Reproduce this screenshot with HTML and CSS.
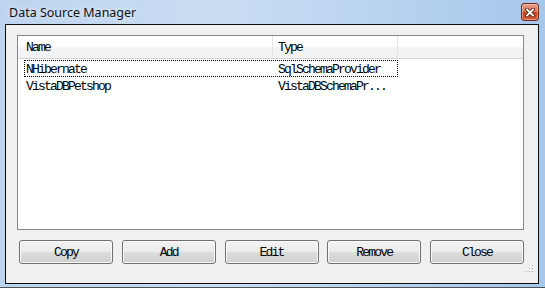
FILE: index.html
```html
<!DOCTYPE html>
<html lang="en">
<head>
<meta charset="UTF-8" />
<title>Data Source Manager</title>
<link rel="stylesheet" href="styles.css">
</head>
<body>

<div class="window">
  <div class="titlebar">
    <span class="title">Data Source Manager</span>
    <button class="close-btn" title="Close">
      <svg width="10" height="9" viewBox="0 0 10 9">
        <path d="M2 1.5 L8 7.5 M8 1.5 L2 7.5" stroke="#5a2114" stroke-width="3.6" stroke-linecap="square" />
        <path d="M2 1.5 L8 7.5 M8 1.5 L2 7.5" stroke="#fff" stroke-width="1.8" stroke-linecap="square" />
      </svg>
    </button>
  </div>

  <div class="client">
    <!-- List of data sources -->
    <div class="listview">
      <div class="lv-header">
        <div class="col col-name">Name</div>
        <div class="col col-type">Type</div>
        <div class="col col-fill"></div>
      </div>
      <div class="lv-body">
        <div class="lv-row focused">
          <span class="cell cell-name">NHibernate</span>
          <span class="cell cell-type">SqlSchemaProvider</span>
        </div>
        <div class="lv-row">
          <span class="cell cell-name">VistaDBPetshop</span>
          <span class="cell cell-type">VistaDBSchemaPr...</span>
        </div>
      </div>
    </div>

    <div class="buttons">
      <button class="btn">Copy</button>
      <button class="btn">Add</button>
      <button class="btn">Edit</button>
      <button class="btn">Remove</button>
      <button class="btn">Close</button>
    </div>

    <!-- size grip -->
    <svg class="grip" width="9" height="9" viewBox="0 0 9 9">
      <rect x="6" y="0" width="1" height="1" fill="#a3a3a3" /><rect x="7" y="1" width="1" height="1" fill="#fff" />
      <rect x="3" y="3" width="1" height="1" fill="#a3a3a3" /><rect x="4" y="4" width="1" height="1" fill="#fff" />
      <rect x="6" y="3" width="1" height="1" fill="#a3a3a3" /><rect x="7" y="4" width="1" height="1" fill="#fff" />
      <rect x="0" y="6" width="1" height="1" fill="#a3a3a3" /><rect x="1" y="7" width="1" height="1" fill="#fff" />
      <rect x="3" y="6" width="1" height="1" fill="#a3a3a3" /><rect x="4" y="7" width="1" height="1" fill="#fff" />
      <rect x="6" y="6" width="1" height="1" fill="#a3a3a3" /><rect x="7" y="7" width="1" height="1" fill="#fff" />
    </svg>
  </div>
</div>

</body>
</html>
```

FILE: styles.css
```css
* {
  box-sizing: border-box;
}
body {
  margin: 0;
  height: 288px;
  overflow: hidden;
  background: #4e535a;
}
.window {
  width: 545px;
  height: 287px;
  display: flex;
  flex-direction: column;
  background: linear-gradient(to right, #bcd4ee 0%, #cadef3 40%, #b9d3ef 70%, #a6c7ec 100%);
}
.titlebar {
  height: 24px;
  display: flex;
  justify-content: space-between;
  align-items: flex-start;
  padding: 0 6px 0 9px;
}
.title {
  font-family: 'Noto Sans', 'Open Sans', sans-serif;
  font-size: 12.5px;
  line-height: 16px;
  padding-top: 5px;
  color: #111;
  text-shadow: 0 0 6px rgba(255, 255, 255, 0.9);
}
.close-btn {
  margin-top: 3px;
  width: 18px;
  height: 18px;
  padding: 0;
  border: 1px solid #6e2a1c;
  border-radius: 3px;
  background: linear-gradient(#e9a08b 0%, #d9765b 45%, #c4401f 55%, #d35a38 100%);
  box-shadow: inset 0 0 0 1px rgba(255, 220, 210, 0.45);
  display: flex;
  justify-content: center;
  align-items: center;
}

/* client area */
.client {
  position: relative;
  height: 260px;
  margin: 0 6px 0 5px;
  border: 1px solid #0d0d0d;
  background: #f0f0f0;
  padding: 10px 14px 0 11px;
  display: flex;
  flex-direction: column;
}
.listview {
  height: 195px;
  border: 1px solid #828790;
  background: #fff;
}
.lv-header {
  display: flex;
  height: 23px;
  border-bottom: 1px solid #d5d5d5;
  background: linear-gradient(#ffffff 0%, #ffffff 45%, #f3f4f6 55%, #f1f2f4 100%);
}
.col {
  height: 22px;
  line-height: 24px;
  border-right: 1px solid #e3e4e6;
}
.col-name {
  width: 255px;
  padding-left: 8px;
}
.col-type {
  width: 125px;
  padding-left: 5px;
}
.col-fill {
  flex: 1;
  border-right: none;
}
.col,
.cell,
.btn {
  font-family: 'Liberation Mono', 'DejaVu Sans Mono', monospace;
  font-size: 13px;
  letter-spacing: -1.8px;
  color: #000;
}
.lv-body {
  padding-top: 1px;
}
.lv-row {
  display: flex;
  width: 374px;
  height: 17px;
  margin-left: 6px;
  border: 1px solid transparent;
  line-height: 17px;
}
.lv-row.focused {
  border: 1px dotted #000;
}
.cell-name {
  width: 253px;
  padding-left: 1px;
}
.cell-type {
  flex: 1;
}

/* button row */
.buttons {
  display: flex;
  justify-content: space-between;
  margin-top: 10px;
  padding-left: 2px;
}
.btn {
  width: 94px;
  height: 24px;
  padding: 1px 0 0;
  border: 1px solid #707070;
  border-radius: 3px;
  background: linear-gradient(#f2f2f2 0%, #ebebeb 50%, #dddddd 50%, #cfcfcf 100%);
  box-shadow: inset 0 0 0 1px #fbfbfb;
}
.grip {
  position: absolute;
  right: 3px;
  bottom: 9px;
}
```
